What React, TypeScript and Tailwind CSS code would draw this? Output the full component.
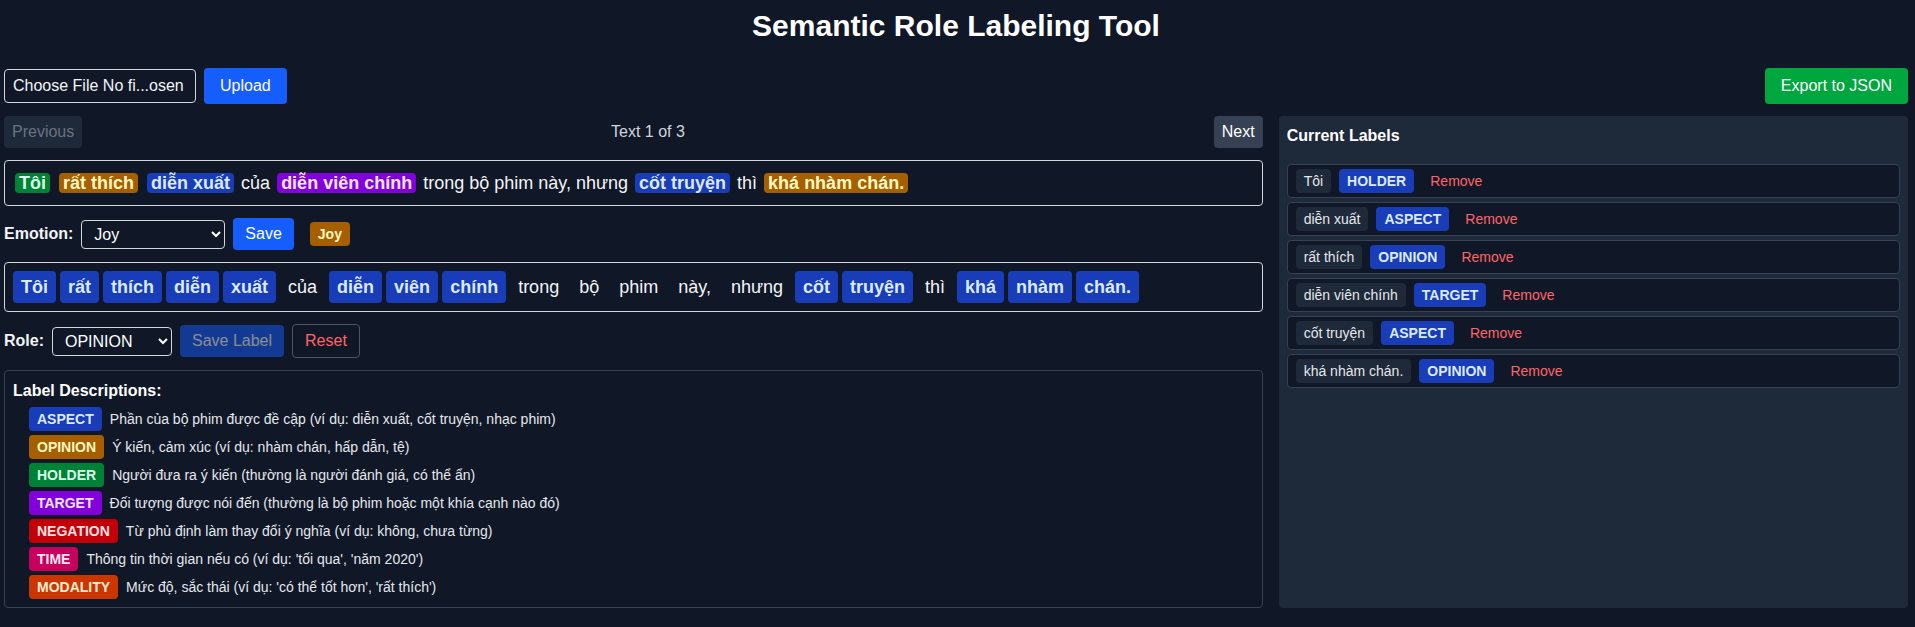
import React, { useState } from 'react';

type Span = { text: string; role?: string };

const roleStyles: Record<string, string> = {
  ASPECT: 'bg-blue-800 text-blue-100',
  OPINION: 'bg-yellow-700 text-yellow-100',
  HOLDER: 'bg-green-700 text-green-100',
  TARGET: 'bg-purple-700 text-purple-100',
  NEGATION: 'bg-red-700 text-red-100',
  TIME: 'bg-pink-700 text-pink-100',
  MODALITY: 'bg-orange-700 text-orange-100',
};

const sentence: Span[] = [
  { text: 'Tôi', role: 'HOLDER' },
  { text: 'rất thích', role: 'OPINION' },
  { text: 'diễn xuất', role: 'ASPECT' },
  { text: 'của' },
  { text: 'diễn viên chính', role: 'TARGET' },
  { text: 'trong bộ phim này, nhưng' },
  { text: 'cốt truyện', role: 'ASPECT' },
  { text: 'thì' },
  { text: 'khá nhàm chán.', role: 'OPINION' },
];

const tokens = [
  'Tôi', 'rất', 'thích', 'diễn', 'xuất', 'của', 'diễn', 'viên', 'chính', 'trong', 'bộ',
  'phim', 'này,', 'nhưng', 'cốt', 'truyện', 'thì', 'khá', 'nhàm', 'chán.',
];
const selectedIdx = [0, 1, 2, 3, 4, 6, 7, 8, 14, 15, 17, 18, 19];

const descriptions: [string, string][] = [
  ['ASPECT', 'Phần của bộ phim được đề cập (ví dụ: diễn xuất, cốt truyện, nhạc phim)'],
  ['OPINION', 'Ý kiến, cảm xúc (ví dụ: nhàm chán, hấp dẫn, tệ)'],
  ['HOLDER', 'Người đưa ra ý kiến (thường là người đánh giá, có thể ẩn)'],
  ['TARGET', 'Đối tượng được nói đến (thường là bộ phim hoặc một khía cạnh nào đó)'],
  ['NEGATION', 'Từ phủ định làm thay đổi ý nghĩa (ví dụ: không, chưa từng)'],
  ['TIME', "Thông tin thời gian nếu có (ví dụ: 'tối qua', 'năm 2020')"],
  ['MODALITY', "Mức độ, sắc thái (ví dụ: 'có thể tốt hơn', 'rất thích')"],
];

const initialLabels = [
  { text: 'Tôi', role: 'HOLDER' },
  { text: 'diễn xuất', role: 'ASPECT' },
  { text: 'rất thích', role: 'OPINION' },
  { text: 'diễn viên chính', role: 'TARGET' },
  { text: 'cốt truyện', role: 'ASPECT' },
  { text: 'khá nhàm chán.', role: 'OPINION' },
];

function App() {
  const [labels, setLabels] = useState(initialLabels);
  const [emotion, setEmotion] = useState('Joy');
  const [role, setRole] = useState('OPINION');

  return (
    <div className="min-h-screen bg-gray-900 text-gray-100 pl-1 pr-[7px] pt-2 pb-5 font-['Liberation_Sans',Arial,sans-serif]">
      <h1 className="text-3xl font-bold text-center text-white mb-6">Semantic Role Labeling Tool</h1>

      <div className="flex items-center justify-between mb-3">
        <div className="flex items-center gap-2">
          <label className="w-[192px] border border-gray-300 rounded px-2 py-1 whitespace-nowrap overflow-hidden cursor-pointer">
            Choose File No fi...osen
            <input type="file" className="hidden" />
          </label>
          <button className="bg-blue-600 text-white rounded px-4 py-1.5">Upload</button>
        </div>
        <button className="bg-green-600 text-white rounded px-4 py-1.5">Export to JSON</button>
      </div>

      <div className="grid grid-cols-[2fr_1fr] gap-4">
        <div className="flex flex-col gap-3">
          <div className="flex items-center justify-between">
            <button className="bg-gray-800 text-gray-500 rounded px-2 py-1" disabled>Previous</button>
            <span className="text-gray-300">Text 1 of 3</span>
            <button className="bg-gray-700 text-white rounded px-2 py-1">Next</button>
          </div>

          <div className="border border-gray-300 rounded p-2 text-lg">
            {sentence.map((s, i) => (
              <React.Fragment key={i}>
                {s.role ? (
                  <span className={`${roleStyles[s.role]} font-bold rounded px-1 mx-0.5`}>{s.text}</span>
                ) : (
                  <span>{s.text}</span>
                )}{' '}
              </React.Fragment>
            ))}
          </div>

          <div className="flex items-center gap-2">
            <span className="font-bold">Emotion:</span>
            <select
              value={emotion}
              onChange={(e) => setEmotion(e.target.value)}
              className="w-36 h-[29px] border border-gray-300 rounded px-2 bg-gray-900 text-white"
            >
              <option>Joy</option>
              <option>Sadness</option>
              <option>Anger</option>
              <option>Fear</option>
              <option>Surprise</option>
              <option>Disgust</option>
            </select>
            <button className="bg-blue-600 text-white rounded px-3 py-1">Save</button>
            <span className="ml-2 bg-yellow-700 text-yellow-100 font-bold text-sm rounded px-2 py-0.5">Joy</span>
          </div>

          <div className="flex flex-wrap gap-1 border border-gray-300 rounded p-2">
            {tokens.map((t, i) => {
              const sel = selectedIdx.includes(i);
              return (
                <button
                  key={i}
                  className={
                    sel
                      ? 'h-8 px-2 rounded text-lg bg-blue-800 text-blue-100 font-bold'
                      : 'h-8 px-2 rounded text-lg text-gray-100'
                  }
                >
                  {t}
                </button>
              );
            })}
          </div>

          <div className="flex items-center gap-2">
            <span className="font-bold">Role:</span>
            <select
              value={role}
              onChange={(e) => setRole(e.target.value)}
              className="w-[120px] h-[29px] border border-gray-300 rounded px-2 bg-gray-900 text-white"
            >
              {Object.keys(roleStyles).map((r) => (
                <option key={r}>{r}</option>
              ))}
            </select>
            <button className="bg-blue-600 opacity-50 text-white rounded px-3 py-1" disabled>Save Label</button>
            <button className="border border-gray-600 text-red-400 rounded px-3 py-1">Reset</button>
          </div>

          <div className="border border-gray-700 rounded p-2">
            <h3 className="font-bold text-white mb-1">Label Descriptions:</h3>
            <ul className="pl-4 flex flex-col gap-1">
              {descriptions.map(([r, d]) => (
                <li key={r} className="flex items-center gap-2 h-6 text-sm text-gray-200">
                  <span className={`${roleStyles[r]} font-bold rounded px-2 py-0.5`}>{r}</span>
                  <span>{d}</span>
                </li>
              ))}
            </ul>
          </div>
        </div>

        <div className="bg-gray-800 rounded p-2">
          <h3 className="font-bold text-white mb-4">Current Labels</h3>
          <div className="flex flex-col gap-1">
            {labels.map((l, i) => (
              <div key={i} className="flex items-center gap-2 bg-gray-900 border border-gray-700 rounded px-2 py-1 text-sm">
                <span className="bg-gray-800 text-gray-200 rounded px-2 py-0.5">{l.text}</span>
                <span className="bg-blue-800 text-blue-100 font-bold rounded px-2 py-0.5">{l.role}</span>
                <button
                  className="text-red-400 px-2"
                  onClick={() => setLabels((prev) => prev.filter((_, j) => j !== i))}
                >
                  Remove
                </button>
              </div>
            ))}
          </div>
        </div>
      </div>
    </div>
  );
}

export default App;
